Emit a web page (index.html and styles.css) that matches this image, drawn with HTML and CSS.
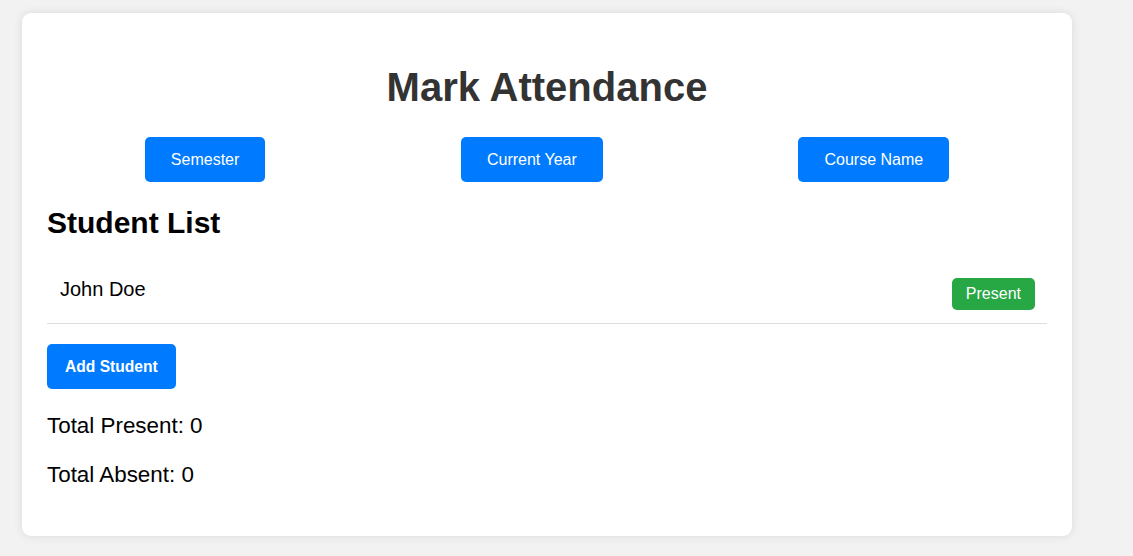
FILE: index.html
```html
<!DOCTYPE html>
<html lang="en">
<head>
<meta charset="utf-8">
<title>Mark Attendance</title>
<link rel="stylesheet" href="styles.css">
</head>
<body>
<div class="card">
  <h1 class="title">Mark Attendance</h1>
  <div class="filters">
    <button class="btn">Semester</button>
    <button class="btn">Current Year</button>
    <button class="btn">Course Name</button>
  </div>
  <h2 class="section-title">Student List</h2>
  <div class="student-row">
    <span class="student-name">John Doe</span>
    <span class="badge-present">Present</span>
  </div>
  <div class="actions">
    <button class="btn btn-add">Add Student</button>
  </div>
  <p class="total">Total Present: 0</p>
  <p class="total">Total Absent: 0</p>
</div>
</body>
</html>
```
FILE: styles.css
```css
* { box-sizing: border-box; }
html, body { height: 100%; }
body {
  margin: 0;
  padding: 13px 0 0 22px;
  background: #f2f2f2;
  font-family: "Liberation Sans", Arial, sans-serif;
  color: #000;
}
.card {
  width: 1050px;
  background: #fff;
  border-radius: 9px;
  padding: 25px 25px 25px;
  box-shadow: 0 0 10px rgba(0, 0, 0, 0.1);
  display: flow-root;
}
.title {
  margin: 27px 0 27px;
  font-size: 40px;
  font-weight: bold;
  color: #333;
  text-align: center;
}
.filters {
  display: flex;
  justify-content: space-around;
}
.btn {
  font-family: "Liberation Sans", Arial, sans-serif;
  font-size: 16px;
  line-height: 19px;
  padding: 13px 26px;
  background: #007bff;
  color: #fff;
  border: none;
  border-radius: 5px;
  cursor: pointer;
}
.section-title {
  margin: 24px 0 26px;
  font-size: 30px;
  font-weight: bold;
}
.student-row {
  display: flex;
  justify-content: space-between;
  align-items: flex-start;
  padding: 12px 12px 13px 13px;
  border-bottom: 1px solid #ddd;
}
.student-name {
  font-size: 20px;
  line-height: 23px;
}
.badge-present {
  background: #28a745;
  color: #fff;
  font-size: 16px;
  line-height: 18px;
  padding: 7px 14px;
  border-radius: 5px;
}
.actions {
  margin-top: 20px;
  padding-bottom: 1px;
  display: flex;
}
.btn-add {
  font-weight: bold;
  font-size: 15.6px;
  padding: 13px 18px;
}
.total {
  font-size: 22.4px;
  margin: 23px 0;
}
```
